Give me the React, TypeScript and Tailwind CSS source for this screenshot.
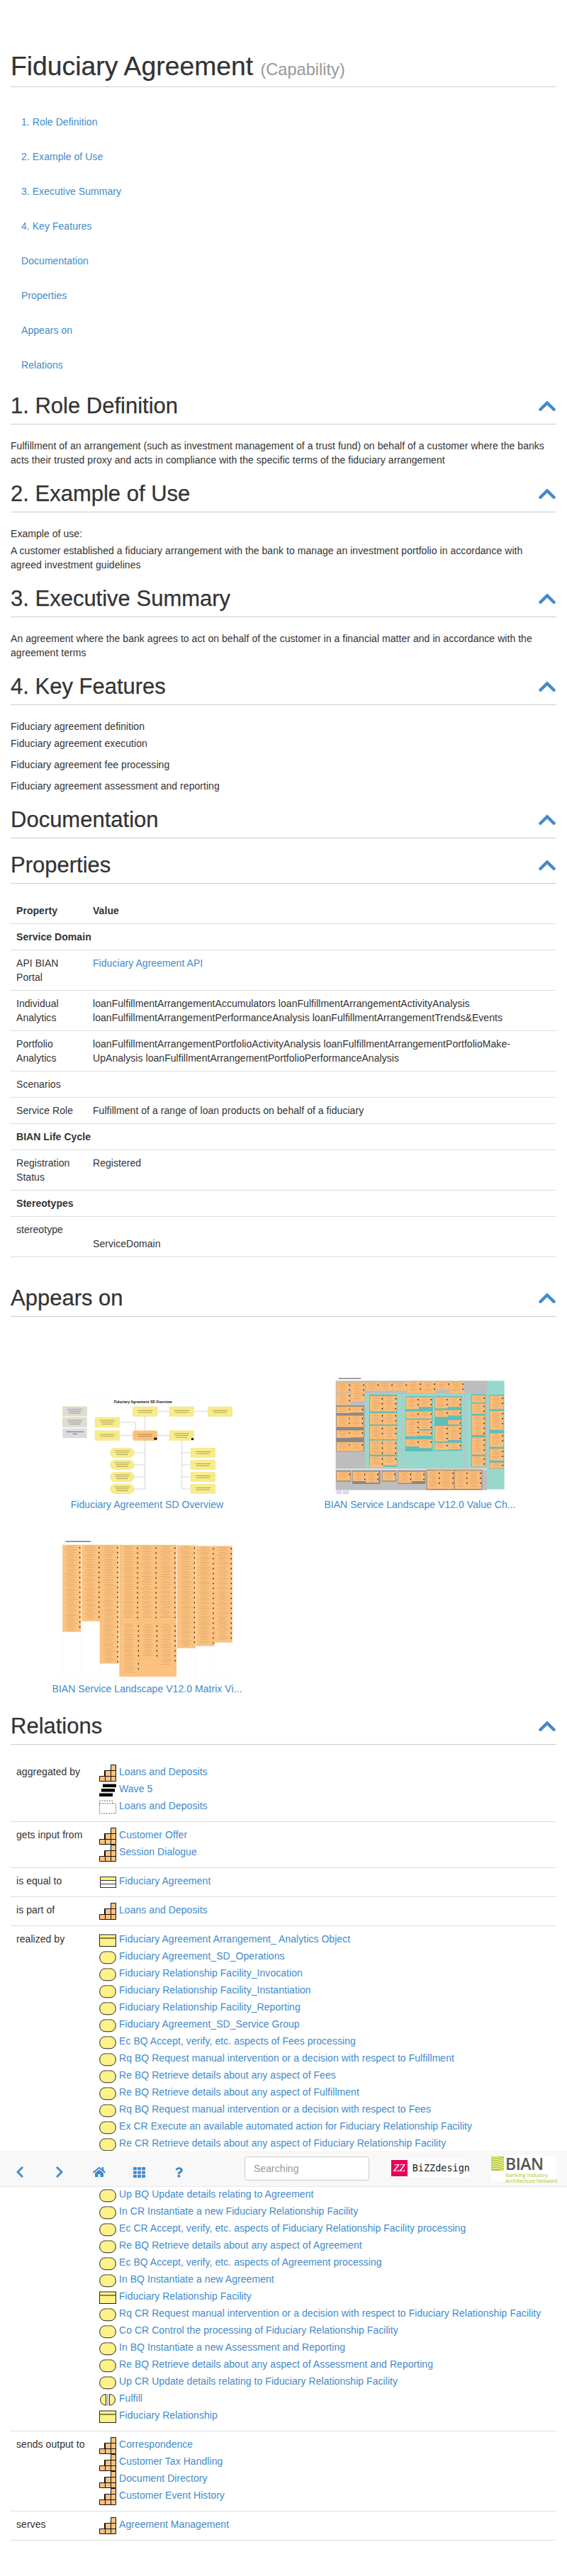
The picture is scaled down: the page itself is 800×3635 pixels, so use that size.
import { FaChevronLeft, FaChevronRight, FaChevronUp, FaHome, FaQuestion, FaTh } from 'react-icons/fa';

const toc = ['1. Role Definition', '2. Example of Use', '3. Executive Summary', '4. Key Features', 'Documentation', 'Properties', 'Appears on', 'Relations'];

function SectionHeader({ title }: { title: string }) {
  return (
    <div className="mt-[21px] flex items-center justify-between border-b border-[#ccc] pb-[9px]">
      <h2 className="text-[31px] leading-[33px] font-normal tracking-normal text-[#333] [-webkit-text-stroke:0.25px]">{title}</h2>
      <FaChevronUp className="h-[28px] w-[26px] text-[#428bca]" />
    </div>
  );
}

function Stair() {
  return (
    <svg width="24" height="24" viewBox="0 0 24 24" className="shrink-0">
      <path d="M16.5.5h7v23H.5v-7h7v-8h9z" fill="#ffc27d" stroke="#111" />
      <path d="M8.5 8.5v15M16.5 8.5v15M8.5 8.5h15M.5 16.5h23" fill="none" stroke="#111" />
    </svg>
  );
}

function Wave() {
  return (
    <svg width="24" height="24" viewBox="0 0 24 24" className="shrink-0">
      <rect x="5" y="3.5" width="19" height="4.5" />
      <rect x="3" y="10" width="19" height="4.5" />
      <rect x="0" y="16.5" width="19" height="4.5" />
    </svg>
  );
}

function Dashed() {
  return (
    <svg width="24" height="24" viewBox="0 0 24 24" className="shrink-0">
      <path d="M.5 7V3h18v4M.5 7h23v14H.5z" fill="none" stroke="#666" strokeDasharray="2 1.5" />
    </svg>
  );
}

function Striped() {
  return (
    <svg width="24" height="24" viewBox="0 0 24 24" className="shrink-0">
      <rect x="1.5" y="4.5" width="22" height="15" fill="#fff" stroke="#333" />
      <rect x="2" y="5" width="21" height="4" fill="#fdf46e" />
      <path d="M2 9.5h21M2 14.5h21" stroke="#333" />
    </svg>
  );
}

function DataObject() {
  return (
    <svg width="24" height="24" viewBox="0 0 24 24" className="shrink-0">
      <rect x=".5" y="4" width="23" height="16.5" fill="#fdf28a" stroke="#222" />
      <path d="M.5 9h23" stroke="#6b6333" strokeWidth="1.6" />
    </svg>
  );
}

function Pill() {
  return (
    <svg width="24" height="24" viewBox="0 0 24 24" className="shrink-0">
      <rect x=".7" y="3.8" width="22.6" height="17" rx="8" fill="#fdf28a" stroke="#222" />
      <path d="M8 3.8h8" stroke="#a79d7c" strokeWidth="1.4" />
    </svg>
  );
}

function Fulfill() {
  return (
    <svg width="24" height="24" viewBox="0 0 24 24" className="shrink-0">
      <path d="M9.5 4.5v15.5a8 7.75 0 0 1 0-15.5zM14.5 4.5v15.5a8 7.75 0 0 0 0-15.5z" fill="#fdf28a" stroke="#222" />
      <path d="M12 4v17" stroke="#777" />
    </svg>
  );
}

type Item = { icon: 'stair' | 'wave' | 'dashed' | 'striped' | 'data' | 'pill' | 'fulfill' | 'hidden'; text: string };

function RelItem({ item }: { item: Item }) {
  if (item.icon === 'hidden') return <div className="h-6" />;
  return (
    <div className="flex h-6 items-start gap-1">
      {item.icon === 'stair' && <Stair />}
      {item.icon === 'wave' && <Wave />}
      {item.icon === 'dashed' && <Dashed />}
      {item.icon === 'striped' && <Striped />}
      {item.icon === 'data' && <DataObject />}
      {item.icon === 'pill' && <Pill />}
      {item.icon === 'fulfill' && <Fulfill />}
      <a className="text-[#428bca]">{item.text}</a>
    </div>
  );
}

const p = (text: string): Item => ({ icon: 'pill', text });
const s = (text: string): Item => ({ icon: 'stair', text });

const relations: { label: string; items: Item[] }[] = [
  { label: 'aggregated by', items: [s('Loans and Deposits'), { icon: 'wave', text: 'Wave 5' }, { icon: 'dashed', text: 'Loans and Deposits' }] },
  { label: 'gets input from', items: [s('Customer Offer'), s('Session Dialogue')] },
  { label: 'is equal to', items: [{ icon: 'striped', text: 'Fiduciary Agreement' }] },
  { label: 'is part of', items: [s('Loans and Deposits')] },
  {
    label: 'realized by',
    items: [
      { icon: 'data', text: 'Fiduciary Agreement Arrangement_ Analytics Object' },
      p('Fiduciary Agreement_SD_Operations'),
      p('Fiduciary Relationship Facility_Invocation'),
      p('Fiduciary Relationship Facility_Instantiation'),
      p('Fiduciary Relationship Facility_Reporting'),
      p('Fiduciary Agreement_SD_Service Group'),
      p('Ec BQ Accept, verify, etc. aspects of Fees processing'),
      p('Rq BQ Request manual intervention or a decision with respect to Fulfillment'),
      p('Re BQ Retrieve details about any aspect of Fees'),
      p('Re BQ Retrieve details about any aspect of Fulfillment'),
      p('Rq BQ Request manual intervention or a decision with respect to Fees'),
      p('Ex CR Execute an available automated action for Fiduciary Relationship Facility'),
      p('Re CR Retrieve details about any aspect of Fiduciary Relationship Facility'),
      { icon: 'hidden', text: '' },
      { icon: 'hidden', text: '' },
      p('Up BQ Update details relating to Agreement'),
      p('In CR Instantiate a new Fiduciary Relationship Facility'),
      p('Ec CR Accept, verify, etc. aspects of Fiduciary Relationship Facility processing'),
      p('Re BQ Retrieve details about any aspect of Agreement'),
      p('Ec BQ Accept, verify, etc. aspects of Agreement processing'),
      p('In BQ Instantiate a new Agreement'),
      { icon: 'data', text: 'Fiduciary Relationship Facility' },
      p('Rq CR Request manual intervention or a decision with respect to Fiduciary Relationship Facility'),
      p('Co CR Control the processing of Fiduciary Relationship Facility'),
      p('In BQ Instantiate a new Assessment and Reporting'),
      p('Re BQ Retrieve details about any aspect of Assessment and Reporting'),
      p('Up CR Update details relating to Fiduciary Relationship Facility'),
      { icon: 'fulfill', text: 'Fulfill' },
      { icon: 'data', text: 'Fiduciary Relationship' },
    ],
  },
  { label: 'sends output to', items: [s('Correspondence'), s('Customer Tax Handling'), s('Document Directory'), s('Customer Event History')] },
  { label: 'serves', items: [s('Agreement Management')] },
];

// thumbnails are drawn in the units of a 3x crop, so each viewBox is 720 wide for a 240px picture
function Block({ x, y, w, h, fill = '#fdbd7a' }: { x: number; y: number; w: number; h: number; fill?: string }) {
  const rows = Math.max(1, Math.floor((h - 4) / 7));
  return (
    <g>
      <rect x={x} y={y} width={w} height={h} fill={fill} stroke="#e8a45e" strokeWidth=".5" />
      {Array.from({ length: rows }, (_, i) => {
        const lw = w * (0.34 + (((i + x) * 37) % 5) * 0.07);
        const ry = y + 4 + i * 7;
        return (
          <g key={i}>
            <rect x={x + (w - 6 - lw) / 2} y={ry} width={lw} height="1.4" fill="#9c7443" opacity=".55" />
            {i % 3 === 1 && <rect x={x + w - 6} y={ry - 2} width="4" height="5" fill="#111" />}
          </g>
        );
      })}
    </g>
  );
}

function Note({ x, y, w, h, round, fill = '#f8ec8a', lines = 2 }: { x: number; y: number; w: number; h: number; round?: number; fill?: string; lines?: number }) {
  return (
    <g>
      <rect x={x} y={y} width={w} height={h} rx={round ?? 0} fill={fill} stroke="#ecdc70" />
      {Array.from({ length: lines }, (_, i) => {
        const lw = w * (0.62 - i * 0.08);
        const ly = y + h / 2 - (lines * 4) + i * 8 + 2;
        return <rect key={i} x={x + (w - lw) / 2} y={ly} width={lw} height="3" fill="#6e6a3c" opacity=".55" />;
      })}
    </g>
  );
}

function OverviewThumb() {
  const lines = [
    'M433 116V176', 'M326 141H394V176', 'M326 197H382', 'M486 197H537', 'M486 95H537', 'M641 95H700',
    'M433 218V423', 'M388 270H433', 'M388 321H433', 'M388 372H433', 'M388 423H433',
    'M590 218V423', 'M590 270H627', 'M590 321H627', 'M590 372H627', 'M590 423H627',
  ];
  return (
    <svg width="240" height="240" viewBox="84 -261 720 720" className="block">
      <rect x="190" y="45" width="470" height="27" fill="#fff" stroke="#eee" />
      <text x="425" y="60" textAnchor="middle" fontSize="15" fontWeight="700" fill="#111" fontFamily="Liberation Sans, sans-serif">Fiduciary Agreement SD Overview</text>
      {lines.map((d) => <path key={d} d={d} fill="none" stroke="#aaa" strokeWidth="1.5" />)}
      <Note x={85} y={74} w={103} h={41} fill="#dcdcdc" lines={3} />
      <Note x={85} y={120} w={103} h={42} fill="#dcdcdc" lines={3} />
      <rect x="85" y="167" width="103" height="41" fill="#dcdcdc" />
      <rect x="100" y="180" width="74" height="3" fill="#4444dd" opacity=".8" />
      <rect x="128" y="189" width="18" height="3" fill="#4444dd" opacity=".8" />
      <Note x={382} y={75} w={104} h={41} round={6} />
      <Note x={537} y={75} w={104} h={41} />
      <Note x={700} y={75} w={103} h={41} />
      <Note x={222} y={120} w={104} h={42} lines={3} />
      <Note x={222} y={176} w={104} h={42} />
      <Note x={382} y={176} w={104} h={42} round={8} fill="#fdbf7c" />
      <rect x="472" y="206" width="12" height="9" fill="#111" />
      <Note x={537} y={176} w={104} h={42} lines={3} />
      <rect x="630" y="208" width="9" height="8" fill="#111" />
      {[250, 301, 352, 403].map((y) => <Note key={y} x={286} y={y} w={102} h={40} round={20} lines={3} />)}
      {[250, 301, 352, 403].map((y) => <Note key={y} x={627} y={y} w={104} h={40} />)}
    </svg>
  );
}

const valueBlocks: number[][] = [
  [42, 62, 58, 42], [103, 62, 57, 80], [42, 107, 58, 50], [42, 165, 58, 27], [98, 165, 57, 25], [42, 203, 58, 48], [98, 203, 57, 48],
  [42, 265, 58, 32], [98, 265, 57, 30], [42, 315, 58, 38], [98, 315, 57, 38],
  [166, 62, 55, 35], [222, 62, 58, 35], [282, 62, 58, 35], [340, 58, 60, 50], [402, 58, 58, 50], [462, 58, 58, 35], [522, 58, 58, 50],
  [183, 120, 56, 65], [240, 120, 56, 65], [183, 192, 56, 48], [240, 192, 56, 48], [183, 246, 56, 57], [240, 246, 56, 57], [183, 308, 56, 60], [240, 308, 56, 60], [183, 375, 56, 45], [240, 375, 56, 38],
  [335, 124, 55, 51], [391, 124, 55, 42], [335, 185, 55, 30], [391, 185, 55, 30], [335, 220, 55, 70], [391, 220, 55, 40], [391, 266, 55, 22], [335, 303, 55, 30], [391, 303, 55, 37],
  [458, 124, 55, 48], [514, 124, 55, 42], [458, 180, 55, 28], [514, 180, 55, 22], [514, 222, 55, 18], [458, 246, 55, 66], [514, 246, 55, 60], [458, 318, 55, 30], [514, 318, 55, 28],
  [615, 117, 55, 30], [615, 152, 55, 43], [615, 203, 55, 82], [615, 295, 55, 73], [615, 375, 55, 43],
  [690, 118, 58, 57], [690, 183, 58, 80], [690, 277, 58, 58], [690, 343, 58, 50], [690, 402, 58, 25],
  [42, 440, 58, 38], [110, 440, 55, 40], [165, 440, 55, 46], [236, 440, 55, 38], [304, 440, 55, 48], [360, 440, 55, 40],
  [425, 435, 55, 78], [480, 435, 58, 78], [542, 435, 55, 78], [597, 435, 58, 78],
];

function ValueThumb() {
  return (
    <svg width="240" height="240" viewBox="36 -171 720 720" className="block">
      <rect x="50" y="44" width="95" height="3" fill="#444" />
      <rect x="38" y="55" width="640" height="463" fill="#bdbdbd" />
      <rect x="678" y="55" width="74" height="460" fill="#98d8cc" />
      <rect x="163" y="110" width="156" height="315" fill="#98d8cc" />
      <rect x="322" y="110" width="260" height="315" fill="#98d8cc" />
      <rect x="585" y="110" width="88" height="315" fill="#98d8cc" />
      <rect x="38" y="428" width="640" height="3" fill="#fff" />
      <rect x="180" y="114" width="118" height="305" fill="#5fbdb8" />
      <rect x="333" y="120" width="116" height="234" fill="#5fbdb8" />
      <rect x="456" y="120" width="116" height="232" fill="#5fbdb8" />
      <rect x="612" y="112" width="60" height="308" fill="#5fbdb8" />
      <rect x="688" y="114" width="62" height="315" fill="#5fbdb8" />
      <rect x="40" y="160" width="118" height="195" fill="#888" />
      <rect x="40" y="436" width="62" height="46" fill="#888" />
      <rect x="108" y="436" width="118" height="56" fill="#888" />
      <rect x="234" y="436" width="60" height="46" fill="#888" />
      <rect x="302" y="436" width="116" height="56" fill="#888" />
      <rect x="422" y="431" width="236" height="86" fill="#888" />
      {valueBlocks.map(([x, y, w, h]) => <Block key={`${x}-${y}`} x={x} y={y} w={w} h={h} />)}
      <rect x="40" y="520" width="24" height="15" fill="#d9d6f2" />
      <rect x="68" y="520" width="26" height="15" fill="#d9d6f2" />
    </svg>
  );
}

const matrixCols: number[][] = [
  [85, 60, 77, 368], [166, 60, 77, 323], [243, 60, 79, 502], [570, 62, 77, 435], [650, 65, 77, 423], [727, 65, 76, 408],
];

function MatrixThumb() {
  const inner = [
    [328, 62, 78, 318], [406, 62, 78, 318], [484, 62, 80, 318], [328, 392, 82, 160], [410, 392, 78, 150], [490, 392, 75, 182], [328, 552, 82, 55],
  ];
  return (
    <svg width="240" height="240" viewBox="84 -81 720 720" className="block">
      <rect x="97" y="44" width="108" height="3" fill="#333" />
      {[85, 166, 243, 325, 570, 650, 727].map((x, i) => (
        <rect key={x} x={x} y="56" width={i === 3 ? 242 : 77} height="565" fill="#fff" stroke="#f0f0f0" />
      ))}
      {matrixCols.map(([x, y, w, h]) => <Block key={x} x={x} y={y} w={w} h={h} fill="#fdc27f" />)}
      <rect x="325" y="60" width="242" height="558" fill="#fdc27f" />
      {inner.map(([x, y, w, h]) => <Block key={`${x}-${y}`} x={x} y={y} w={w} h={h} fill="#fdc27f" />)}
    </svg>
  );
}

function Thumb({ caption, children }: { caption: string; children: React.ReactNode }) {
  return (
    <div className="flex flex-col items-center">
      {children}
      <a className="text-[#428bca]">{caption}</a>
    </div>
  );
}

function BizzLogo() {
  return (
    <div className="mt-3 ml-[31px] flex h-[25px] w-[111px] items-center gap-[7px] bg-white">
      <div className="flex h-[23px] w-[23px] items-center justify-center bg-[#e6005c] font-['Liberation_Serif',serif] text-[15px] leading-none text-white italic">ZZ</div>
      <span className="font-['DejaVu_Sans_Mono',monospace] text-[13.5px] leading-none tracking-normal text-[#222]">BiZZdesign</span>
    </div>
  );
}

function BianLogo() {
  return (
    <div className="mt-[7px] ml-[30px] flex h-[36px] w-[92px] bg-white">
      <svg width="18" height="20" viewBox="0 0 18 20" className="mt-px shrink-0">
        <rect width="18" height="20" fill="#b9cc2a" />
        {[3, 6, 9, 12, 15, 18].map((y) => (
          <path key={y} d={`M0 ${y - 1}Q9 ${y - 3} 18 ${y + 1}`} fill="none" stroke="#fff" strokeWidth=".9" />
        ))}
      </svg>
      <div className="ml-[2px] flex flex-col">
        <span className="font-['Open_Sans',sans-serif] text-[23px] leading-[22px] font-semibold tracking-[-0.5px] text-[#555]">BIAN</span>
        <span className="mt-[1px] font-['Open_Sans',sans-serif] text-[8px] leading-[7px] tracking-[-0.2px] whitespace-nowrap text-[#b4c81e]">Banking Industry</span>
        <span className="mt-[1px] font-['Open_Sans',sans-serif] text-[8px] leading-[7px] tracking-[-0.3px] whitespace-nowrap text-[#b4c81e]">Architecture Network</span>
      </div>
    </div>
  );
}

function NavBar() {
  return (
    <div className="absolute top-[3035px] right-0 left-0 flex h-[51px] items-start border-b border-[#e7e7e7] bg-[#f8f8f8]">
      <div className="flex h-[50px] w-[280px] items-center pt-2.5 text-[#428bca]">
        <div className="flex w-14 justify-center"><FaChevronLeft className="h-[18px] w-[12px]" /></div>
        <div className="flex w-14 justify-center"><FaChevronRight className="h-[18px] w-[12px]" /></div>
        <div className="flex w-14 justify-center"><FaHome className="h-[16px] w-[18px]" /></div>
        <div className="flex w-14 justify-center"><FaTh className="h-[17px] w-[19px]" /></div>
        <div className="flex w-14 justify-center"><FaQuestion className="h-[15px] w-[11px]" /></div>
      </div>
      <input placeholder="Searching" className="mt-2 ml-[65px] h-[34px] w-[176px] rounded border border-[#ccc] bg-white px-3 text-sm text-[#555] placeholder:text-[#999]" />
      <BizzLogo />
      <BianLogo />
    </div>
  );
}

export default function App() {
  return (
    <div className="relative min-h-[3635px] bg-white px-[15px] pb-[50px] font-['Liberation_Sans',sans-serif] text-sm leading-5 tracking-[0.05px] text-[#333]">
      <h1 className="border-b border-[#ccc] pt-[73px] pb-[9px] text-[37.3px] leading-[40px] font-normal tracking-normal">
        <span className="[-webkit-text-stroke:0.25px]">Fiduciary Agreement</span> <small className="text-[23.6px] leading-none font-normal text-[#999]">(Capability)</small>
      </h1>

      <ul className="mt-[39px] flex flex-col gap-[29px] pl-[15px]">
        {toc.map((t) => (
          <li key={t}><a className="text-[#428bca]">{t}</a></li>
        ))}
      </ul>

      <div className="h-[10px]" />
      <SectionHeader title="1. Role Definition" />
      <p className="mt-5">Fulfillment of an arrangement (such as investment management of a trust fund) on behalf of a customer where the banks acts their trusted proxy and acts in compliance with the specific terms of the fiduciary arrangement</p>

      <SectionHeader title="2. Example of Use" />
      <p className="mt-5">Example of use:</p>
      <p className="mt-1">A customer established a fiduciary arrangement with the bank to manage an investment portfolio in accordance with agreed investment guidelines</p>

      <SectionHeader title="3. Executive Summary" />
      <p className="mt-5">An agreement where the bank agrees to act on behalf of the customer in a financial matter and in accordance with the agreement terms</p>

      <SectionHeader title="4. Key Features" />
      <p className="mt-5">Fiduciary agreement definition</p>
      <p className="mt-1">Fiduciary agreement execution</p>
      <p className="mt-2.5">Fiduciary agreement fee processing</p>
      <p className="mt-2.5">Fiduciary agreement assessment and reporting</p>

      <SectionHeader title="Documentation" />
      <SectionHeader title="Properties" />

      <table className="mt-5 w-full table-fixed border-collapse">
        <colgroup>
          <col className="w-[108px]" />
          <col />
        </colgroup>
        <tbody>
          <tr className="border-b border-[#ddd] font-bold"><td className="p-2">Property</td><td className="p-2">Value</td></tr>
          <tr className="border-b border-[#ddd] font-bold"><td colSpan={2} className="p-2">Service Domain</td></tr>
          <tr className="border-b border-[#ddd] align-top"><td className="p-2">API BIAN Portal</td><td className="p-2"><a className="text-[#428bca]">Fiduciary Agreement API</a></td></tr>
          <tr className="border-b border-[#ddd] align-top"><td className="p-2">Individual Analytics</td><td className="p-2">loanFulfillmentArrangementAccumulators loanFulfillmentArrangementActivityAnalysis loanFulfillmentArrangementPerformanceAnalysis loanFulfillmentArrangementTrends&amp;Events</td></tr>
          <tr className="border-b border-[#ddd] align-top"><td className="p-2">Portfolio Analytics</td><td className="p-2">loanFulfillmentArrangementPortfolioActivityAnalysis loanFulfillmentArrangementPortfolioMake-UpAnalysis loanFulfillmentArrangementPortfolioPerformanceAnalysis</td></tr>
          <tr className="border-b border-[#ddd]"><td className="p-2">Scenarios</td><td className="p-2"></td></tr>
          <tr className="border-b border-[#ddd]"><td className="p-2">Service Role</td><td className="p-2">Fulfillment of a range of loan products on behalf of a fiduciary</td></tr>
          <tr className="border-b border-[#ddd] font-bold"><td colSpan={2} className="p-2">BIAN Life Cycle</td></tr>
          <tr className="border-b border-[#ddd] align-top"><td className="p-2">Registration Status</td><td className="p-2">Registered</td></tr>
          <tr className="border-b border-[#ddd] font-bold"><td colSpan={2} className="p-2">Stereotypes</td></tr>
          <tr className="border-b border-[#ddd] align-top"><td className="p-2">stereotype</td><td className="p-2"><br />ServiceDomain</td></tr>
        </tbody>
      </table>

      <div className="h-5" />
      <SectionHeader title="Appears on" />

      <div className="mt-[15px] grid grid-cols-2">
        <Thumb caption="Fiduciary Agreement SD Overview"><OverviewThumb /></Thumb>
        <Thumb caption="BIAN Service Landscape V12.0 Value Ch..."><ValueThumb /></Thumb>
        <Thumb caption="BIAN Service Landscape V12.0 Matrix Vi..."><MatrixThumb /></Thumb>
      </div>

      <div className="h-[5px]" />
      <SectionHeader title="Relations" />

      <table className="mt-5 w-full table-fixed border-collapse">
        <colgroup>
          <col className="w-[117px]" />
          <col />
        </colgroup>
        <tbody>
          {relations.map((r) => (
            <tr key={r.label} className="border-b border-[#ddd] align-top">
              <td className="p-2">{r.label}</td>
              <td className="p-2">
                {r.items.map((item, i) => <RelItem key={i} item={item} />)}
              </td>
            </tr>
          ))}
        </tbody>
      </table>

      <NavBar />
    </div>
  );
}
